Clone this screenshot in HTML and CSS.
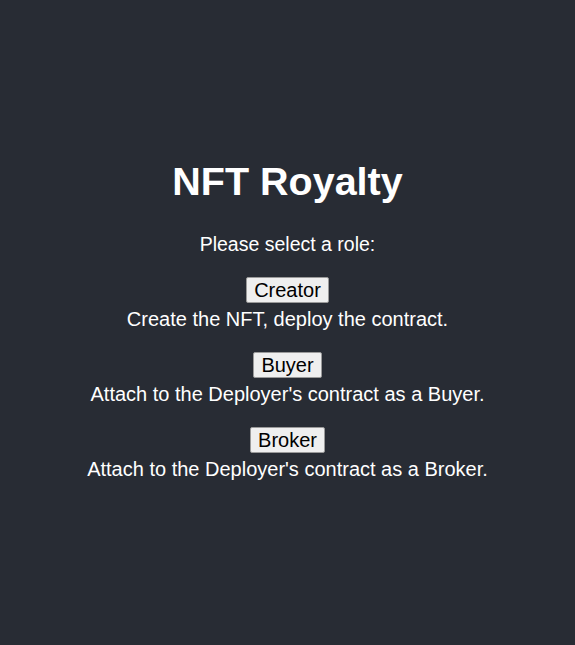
FILE: index.html
```html
<!DOCTYPE html>
<html>
<head>
<meta charset="utf-8">
<link rel="stylesheet" href="styles.css">
</head>
<body>
<div class="app">
  <h1 class="title">NFT Royalty</h1>
  <p class="prompt">Please select a role:</p>
  <div class="roles">
    <div class="role">
      <button class="btn">Creator</button>
      <div class="desc">Create the NFT, deploy the contract.</div>
    </div>
    <div class="role">
      <button class="btn">Buyer</button>
      <div class="desc">Attach to the Deployer's contract as a Buyer.</div>
    </div>
    <div class="role">
      <button class="btn">Broker</button>
      <div class="desc">Attach to the Deployer's contract as a Broker.</div>
    </div>
  </div>
</div>
</body>
</html>
```
FILE: styles.css
```css
html, body {
  margin: 0;
  padding: 0;
  background: #282c34;
}
body {
  min-height: 645px;
  font-family: "Liberation Sans", Arial, sans-serif;
  color: #ffffff;
}
.app {
  display: flex;
  flex-direction: column;
  align-items: center;
  padding-top: 157px;
  text-align: center;
}
.title {
  margin: 0;
  font-size: 39.5px;
  line-height: 48px;
  font-weight: 700;
}
.prompt {
  margin: 27px 0 0 0;
  font-size: 19.5px;
  line-height: 24px;
}
.roles {
  display: flex;
  flex-direction: column;
  align-items: center;
  gap: 21px;
  margin-top: 21px;
}
.role {
  display: flex;
  flex-direction: column;
  align-items: center;
}
.btn {
  box-sizing: border-box;
  font-family: "Liberation Sans", Arial, sans-serif;
  font-size: 20px;
  line-height: 22px;
  height: 26px;
  padding: 0 7px;
  color: #000;
  background: #efefef;
  border: 1px solid #9a9a9a;
  border-radius: 2px;
}
.desc {
  margin-top: 4px;
  font-size: 20px;
  line-height: 24px;
}
```
